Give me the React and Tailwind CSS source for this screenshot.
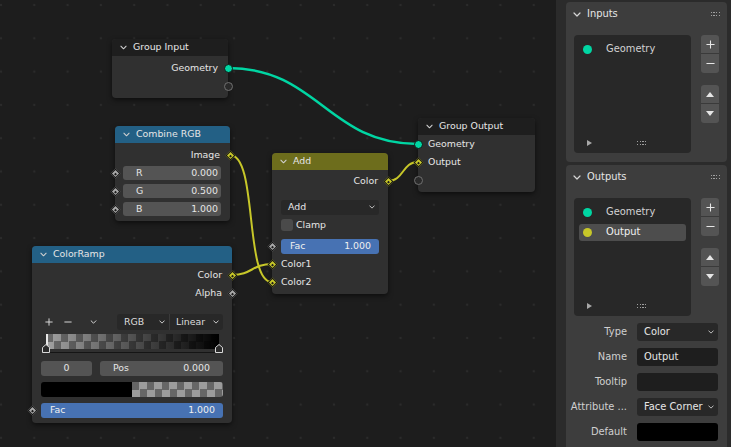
import React from 'react'

function Chevron({ className = '' }) {
  return (
    <svg viewBox="0 0 8 5" className={className} fill="none" stroke="currentColor" strokeWidth="1.2" strokeLinecap="round" strokeLinejoin="round">
      <path d="M1 1l3 3 3-3" />
    </svg>
  )
}

function Plus({ className = '' }) {
  return (
    <svg viewBox="0 0 10 10" className={className} fill="none" stroke="currentColor" strokeWidth="1.2">
      <path d="M5 0.5v9M0.5 5h9" />
    </svg>
  )
}

function Minus({ className = '' }) {
  return (
    <svg viewBox="0 0 10 10" className={className} fill="none" stroke="currentColor" strokeWidth="1.2">
      <path d="M0.5 5h9" />
    </svg>
  )
}

function Grip({ className = '' }) {
  return (
    <div className={`grid grid-cols-4 gap-[1.5px] ${className}`}>
      {Array.from({ length: 8 }).map((_, i) => (
        <span key={i} className="w-[1.2px] h-[1.2px] bg-[#a0a0a0]" />
      ))}
    </div>
  )
}

function Socket({ kind, side }) {
  const edge = side === 'in' ? 'left-[-5px]' : 'right-[-5px]'
  let dot
  if (kind === 'geo') dot = <span className="shrink-0 w-[9px] h-[9px] rounded-full bg-[#00d6a3] border border-[#141414]" />
  else if (kind === 'empty') dot = <span className="shrink-0 w-[9px] h-[9px] rounded-full border-[1.5px] border-[#707070] bg-[#2a2a2a]" />
  else {
    const fill = kind === 'color' ? 'bg-[#c7c729]' : 'bg-[#a8a8a8]'
    dot = (
      <span className={`shrink-0 w-[7px] h-[7px] rotate-45 border border-[#161616] flex items-center justify-center ${fill}`}>
        <span className="w-[2px] h-[2px] bg-[#1a1a1a]" />
      </span>
    )
  }
  return <span className={`absolute top-1/2 mt-[-5px] w-[10px] h-[10px] flex items-center justify-center ${edge}`}>{dot}</span>
}

function Node({ className, title, header, children }) {
  return (
    <div className={`absolute rounded-[4px] bg-[#303030] shadow-[0_2px_5px_rgba(0,0,0,0.55)] pb-[3px] ${className}`}>
      <div className={`h-[17px] rounded-t-[4px] flex items-center pl-[8px] gap-[6px] text-[#e6e6e6] ${header}`}>
        <Chevron className="w-[7px] h-[5px] text-[#d0d0d0]" />
        <span>{title}</span>
      </div>
      {children}
    </div>
  )
}

function Row({ children, pad = 'px-[10px]', className = '' }) {
  return <div className={`relative h-[18px] flex items-center ${pad} ${className}`}>{children}</div>
}

function NumField({ label, value }) {
  return (
    <div className="w-full h-[14px] rounded-[3px] bg-[#545454] flex items-center justify-between pl-[13px] pr-[3px] text-[#e6e6e6]">
      <span>{label}</span>
      <span>{value}</span>
    </div>
  )
}

function FacBar() {
  return (
    <div className="w-full h-[15px] rounded-[3px] bg-[#4772b3] flex items-center justify-between pl-[9px] pr-[8px] text-[#f0f0f0]">
      <span>Fac</span>
      <span>1.000</span>
    </div>
  )
}

function Marker() {
  return (
    <svg viewBox="0 0 8 9" className="w-[8px] h-[9px]">
      <path d="M0.5 3.5L4 0.5L7.5 3.5V8.5H0.5Z" fill="#2b2b2b" stroke="#d8d8d8" strokeWidth="1" />
    </svg>
  )
}

function Canvas() {
  return (
    <div className="relative flex-1 h-full bg-[#1d1d1d] bg-[radial-gradient(circle,#2b2b2b_1px,transparent_1.6px)] bg-[length:33.3px_33.3px] bg-[position:-15.65px_-11.65px] text-[9.4px] text-[#e6e6e6]">
      <svg className="absolute inset-0 w-full h-full" viewBox="0 0 556 447" fill="none">
        <path d="M228 68C318 68 328 144 418 144" stroke="#00d6a3" strokeWidth="2.5" />
        <path d="M230 155C258 155 244 282 272 282" stroke="#c7c729" strokeWidth="2" />
        <path d="M232 275C252 275 252 264 272 264" stroke="#c7c729" strokeWidth="2" />
        <path d="M388 181C404 181 402 162 418 162" stroke="#c7c729" strokeWidth="2" />
      </svg>

      <Node className="left-[112px] top-[39px] w-[116px]" title="Group Input" header="bg-[#1e1e1e]">
        <div className="pt-[3px]">
          <Row className="justify-end">Geometry<Socket kind="geo" side="out" /></Row>
          <Row><Socket kind="empty" side="out" /></Row>
        </div>
      </Node>

      <Node className="left-[115px] top-[126px] w-[115px]" title="Combine RGB" header="bg-[#236085]">
        <div className="pt-[3px]">
          <Row className="justify-end">Image<Socket kind="color" side="out" /></Row>
          <Row pad="pl-[8px] pr-[9px]"><NumField label="R" value="0.000" /><Socket kind="float" side="in" /></Row>
          <Row pad="pl-[8px] pr-[9px]"><NumField label="G" value="0.500" /><Socket kind="float" side="in" /></Row>
          <Row pad="pl-[8px] pr-[9px]"><NumField label="B" value="1.000" /><Socket kind="float" side="in" /></Row>
        </div>
      </Node>

      <Node className="left-[272px] top-[153px] w-[116px]" title="Add" header="bg-[#6d6d1c]">
        <div className="pt-[2px]">
          <Row className="justify-end">Color<Socket kind="color" side="out" /></Row>
          <Row pad="px-[9px]" className="mt-[8px]">
            <div className="w-full h-[15px] rounded-[3px] bg-[#282828] flex items-center justify-between pl-[7px] pr-[4px]">
              <span>Add</span>
              <Chevron className="w-[6px] h-[4px] text-[#cfcfcf]" />
            </div>
          </Row>
          <Row pad="px-[9px]">
            <span className="w-[12px] h-[12px] rounded-[3px] bg-[#4a4a4a]" />
            <span className="ml-[3px]">Clamp</span>
          </Row>
          <Row pad="px-[9px]" className="mt-[3px]"><FacBar /><Socket kind="float" side="in" /></Row>
          <Row pad="px-[9px]">Color1<Socket kind="color" side="in" /></Row>
          <Row pad="px-[9px]">Color2<Socket kind="color" side="in" /></Row>
        </div>
      </Node>

      <Node className="left-[32px] top-[246px] w-[200px] pb-[5px]" title="ColorRamp" header="bg-[#236085]">
        <div className="pt-[3px]">
          <Row className="justify-end">Color<Socket kind="color" side="out" /></Row>
          <Row className="justify-end">Alpha<Socket kind="float" side="out" /></Row>
          <div className="mt-[11px] h-[18px] flex items-center pl-[13px] pr-[9px] text-[#dcdcdc]">
            <Plus className="w-[8px] h-[8px]" />
            <Minus className="w-[8px] h-[8px] ml-[11px]" />
            <Chevron className="w-[7px] h-[4px] ml-[18px]" />
            <div className="ml-auto flex h-[16px] w-[106px] rounded-[3px] bg-[#282828]">
              <div className="w-[53px] flex items-center justify-between pl-[7px] pr-[4px] border-r border-[#3a3a3a]">
                <span>RGB</span>
                <Chevron className="w-[6px] h-[4px]" />
              </div>
              <div className="flex-1 flex items-center justify-between pl-[6px] pr-[4px]">
                <span>Linear</span>
                <Chevron className="w-[6px] h-[4px]" />
              </div>
            </div>
          </div>
          <div className="relative mt-[3px] ml-[14px] mr-[13px] h-[19px]">
            <div className="h-[15px] bg-[repeating-conic-gradient(#a0a0a0_0%_25%,#6a6a6a_0%_50%)] bg-[length:15px_15px]">
              <div className="h-full w-full bg-gradient-to-r from-transparent to-black border-l-2 border-[#e8e8e8]" />
            </div>
            <div className="h-[1px] mt-[3px] bg-[#151515]" />
            <div className="absolute left-[-4px] top-[10px]"><Marker /></div>
            <div className="absolute right-[-4px] top-[10px]"><Marker /></div>
          </div>
          <div className="mt-[8px] flex gap-[8px] px-[9px] h-[15px]">
            <div className="w-[51px] rounded-[3px] bg-[#545454] flex items-center justify-center">0</div>
            <div className="flex-1 rounded-[3px] bg-[#545454] flex items-center justify-between px-[13px]">
              <span>Pos</span>
              <span>0.000</span>
            </div>
          </div>
          <div className="mt-[6px] mx-[9px] h-[15px] flex rounded-[3px] overflow-hidden">
            <div className="w-1/2 bg-black" />
            <div className="flex-1 bg-[repeating-conic-gradient(#9c9c9c_0%_25%,#666666_0%_50%)] bg-[length:15px_15px]" />
          </div>
          <div className="relative mt-[6px] h-[15px] flex items-center px-[9px]"><FacBar /><Socket kind="float" side="in" /></div>
        </div>
      </Node>

      <Node className="left-[418px] top-[118px] w-[117px]" title="Group Output" header="bg-[#1e1e1e]">
        <Row>Geometry<Socket kind="geo" side="in" /></Row>
        <Row>Output<Socket kind="color" side="in" /></Row>
        <Row><Socket kind="empty" side="in" /></Row>
      </Node>
    </div>
  )
}

function SideButtons() {
  return (
    <div className="w-[18px] flex flex-col text-[#e6e6e6]">
      <div className="rounded-[3px] overflow-hidden flex flex-col gap-[1px] bg-[#3a3a3a]">
        <div className="h-[18px] bg-[#545454] flex items-center justify-center"><Plus className="w-[9px] h-[9px]" /></div>
        <div className="h-[19px] bg-[#545454] flex items-center justify-center"><Minus className="w-[9px] h-[9px]" /></div>
      </div>
      <div className="mt-[12px] rounded-[3px] overflow-hidden flex flex-col gap-[1px] bg-[#3a3a3a]">
        <div className="h-[18px] bg-[#545454] flex items-center justify-center">
          <svg viewBox="0 0 8 5" className="w-[8px] h-[5px]"><path d="M0 5L4 0L8 5Z" fill="currentColor" /></svg>
        </div>
        <div className="h-[19px] bg-[#545454] flex items-center justify-center">
          <svg viewBox="0 0 8 5" className="w-[8px] h-[5px]"><path d="M0 0L8 0L4 5Z" fill="currentColor" /></svg>
        </div>
      </div>
    </div>
  )
}

function ListItem({ color, label, active }) {
  return (
    <div className={`h-[17.5px] flex items-center rounded-[3px] pl-[4px] ${active ? 'bg-[#4d4d4d] text-[#f2f2f2]' : 'text-[#d2d2d2]'}`}>
      <span className={`shrink-0 w-[9px] h-[9px] rounded-full ${color}`} />
      <span className="ml-[14px]">{label}</span>
    </div>
  )
}

function SocketList({ children }) {
  return (
    <div className="flex-1 h-[118px] rounded-[4px] bg-[#282828] flex flex-col px-[5px] pt-[6px]">
      <div className="flex flex-col gap-[2px]">{children}</div>
      <div className="mt-auto h-[20px] flex items-center pl-[8px]">
        <svg viewBox="0 0 5 6" className="w-[5px] h-[6px]"><path d="M0 0L5 3L0 6Z" fill="#a8a8a8" /></svg>
        <Grip className="ml-[45px]" />
      </div>
    </div>
  )
}

function PanelHeader({ title }) {
  return (
    <div className="h-[24px] flex items-center pl-[7px] pr-[7px] text-[#e6e6e6]">
      <Chevron className="w-[8px] h-[5px] text-[#d6d6d6]" />
      <span className="ml-[6px]">{title}</span>
      <Grip className="ml-auto" />
    </div>
  )
}

function Prop({ label, children }) {
  return (
    <>
      <div className="h-[18px] flex items-center justify-end whitespace-nowrap text-[#d0d0d0]">{label}</div>
      {children}
    </>
  )
}

function Sidebar() {
  return (
    <div className="w-[175px] h-full bg-[#2b2b2b] pl-[10px] pr-[4px] pt-[2px] flex flex-col gap-[3px] text-[9.9px] text-[#e6e6e6]">
      <div className="h-[160px] shrink-0 rounded-[4px] bg-[#3d3d3d]">
        <PanelHeader title="Inputs" />
        <div className="mt-[9px] flex gap-[10px] pl-[8px] pr-[8px]">
          <SocketList>
            <ListItem color="bg-[#00d6a3]" label="Geometry" />
          </SocketList>
          <SideButtons />
        </div>
      </div>
      <div className="flex-1 rounded-t-[4px] bg-[#3d3d3d]">
        <PanelHeader title="Outputs" />
        <div className="mt-[9px] flex gap-[10px] pl-[8px] pr-[8px]">
          <SocketList>
            <ListItem color="bg-[#00d6a3]" label="Geometry" />
            <ListItem color="bg-[#c7c729]" label="Output" active />
          </SocketList>
          <SideButtons />
        </div>
        <div className="mt-[7px] grid grid-cols-[55px_1fr] gap-x-[10px] gap-y-[7px] pl-[6px] pr-[9px]">
          <Prop label="Type">
            <div className="h-[18px] rounded-[3px] bg-[#282828] flex items-center justify-between pl-[7px] pr-[4px]">
              <span>Color</span>
              <Chevron className="w-[6px] h-[4px] text-[#cfcfcf]" />
            </div>
          </Prop>
          <Prop label="Name">
            <div className="h-[18px] rounded-[3px] bg-[#1e1e1e] flex items-center pl-[7px]">Output</div>
          </Prop>
          <Prop label="Tooltip">
            <div className="h-[18px] rounded-[3px] bg-[#1e1e1e]" />
          </Prop>
          <Prop label="Attribute ...">
            <div className="h-[18px] rounded-[3px] bg-[#282828] flex items-center justify-between pl-[7px] pr-[4px] whitespace-nowrap">
              <span>Face Corner</span>
              <Chevron className="w-[6px] h-[4px] text-[#cfcfcf]" />
            </div>
          </Prop>
          <Prop label="Default">
            <div className="h-[18px] rounded-[3px] bg-black" />
          </Prop>
        </div>
      </div>
    </div>
  )
}

export default function App() {
  return (
    <div className="w-[731px] h-[447px] flex overflow-hidden bg-[#1d1d1d] font-['DejaVu_Sans',sans-serif]">
      <Canvas />
      <Sidebar />
    </div>
  )
}
